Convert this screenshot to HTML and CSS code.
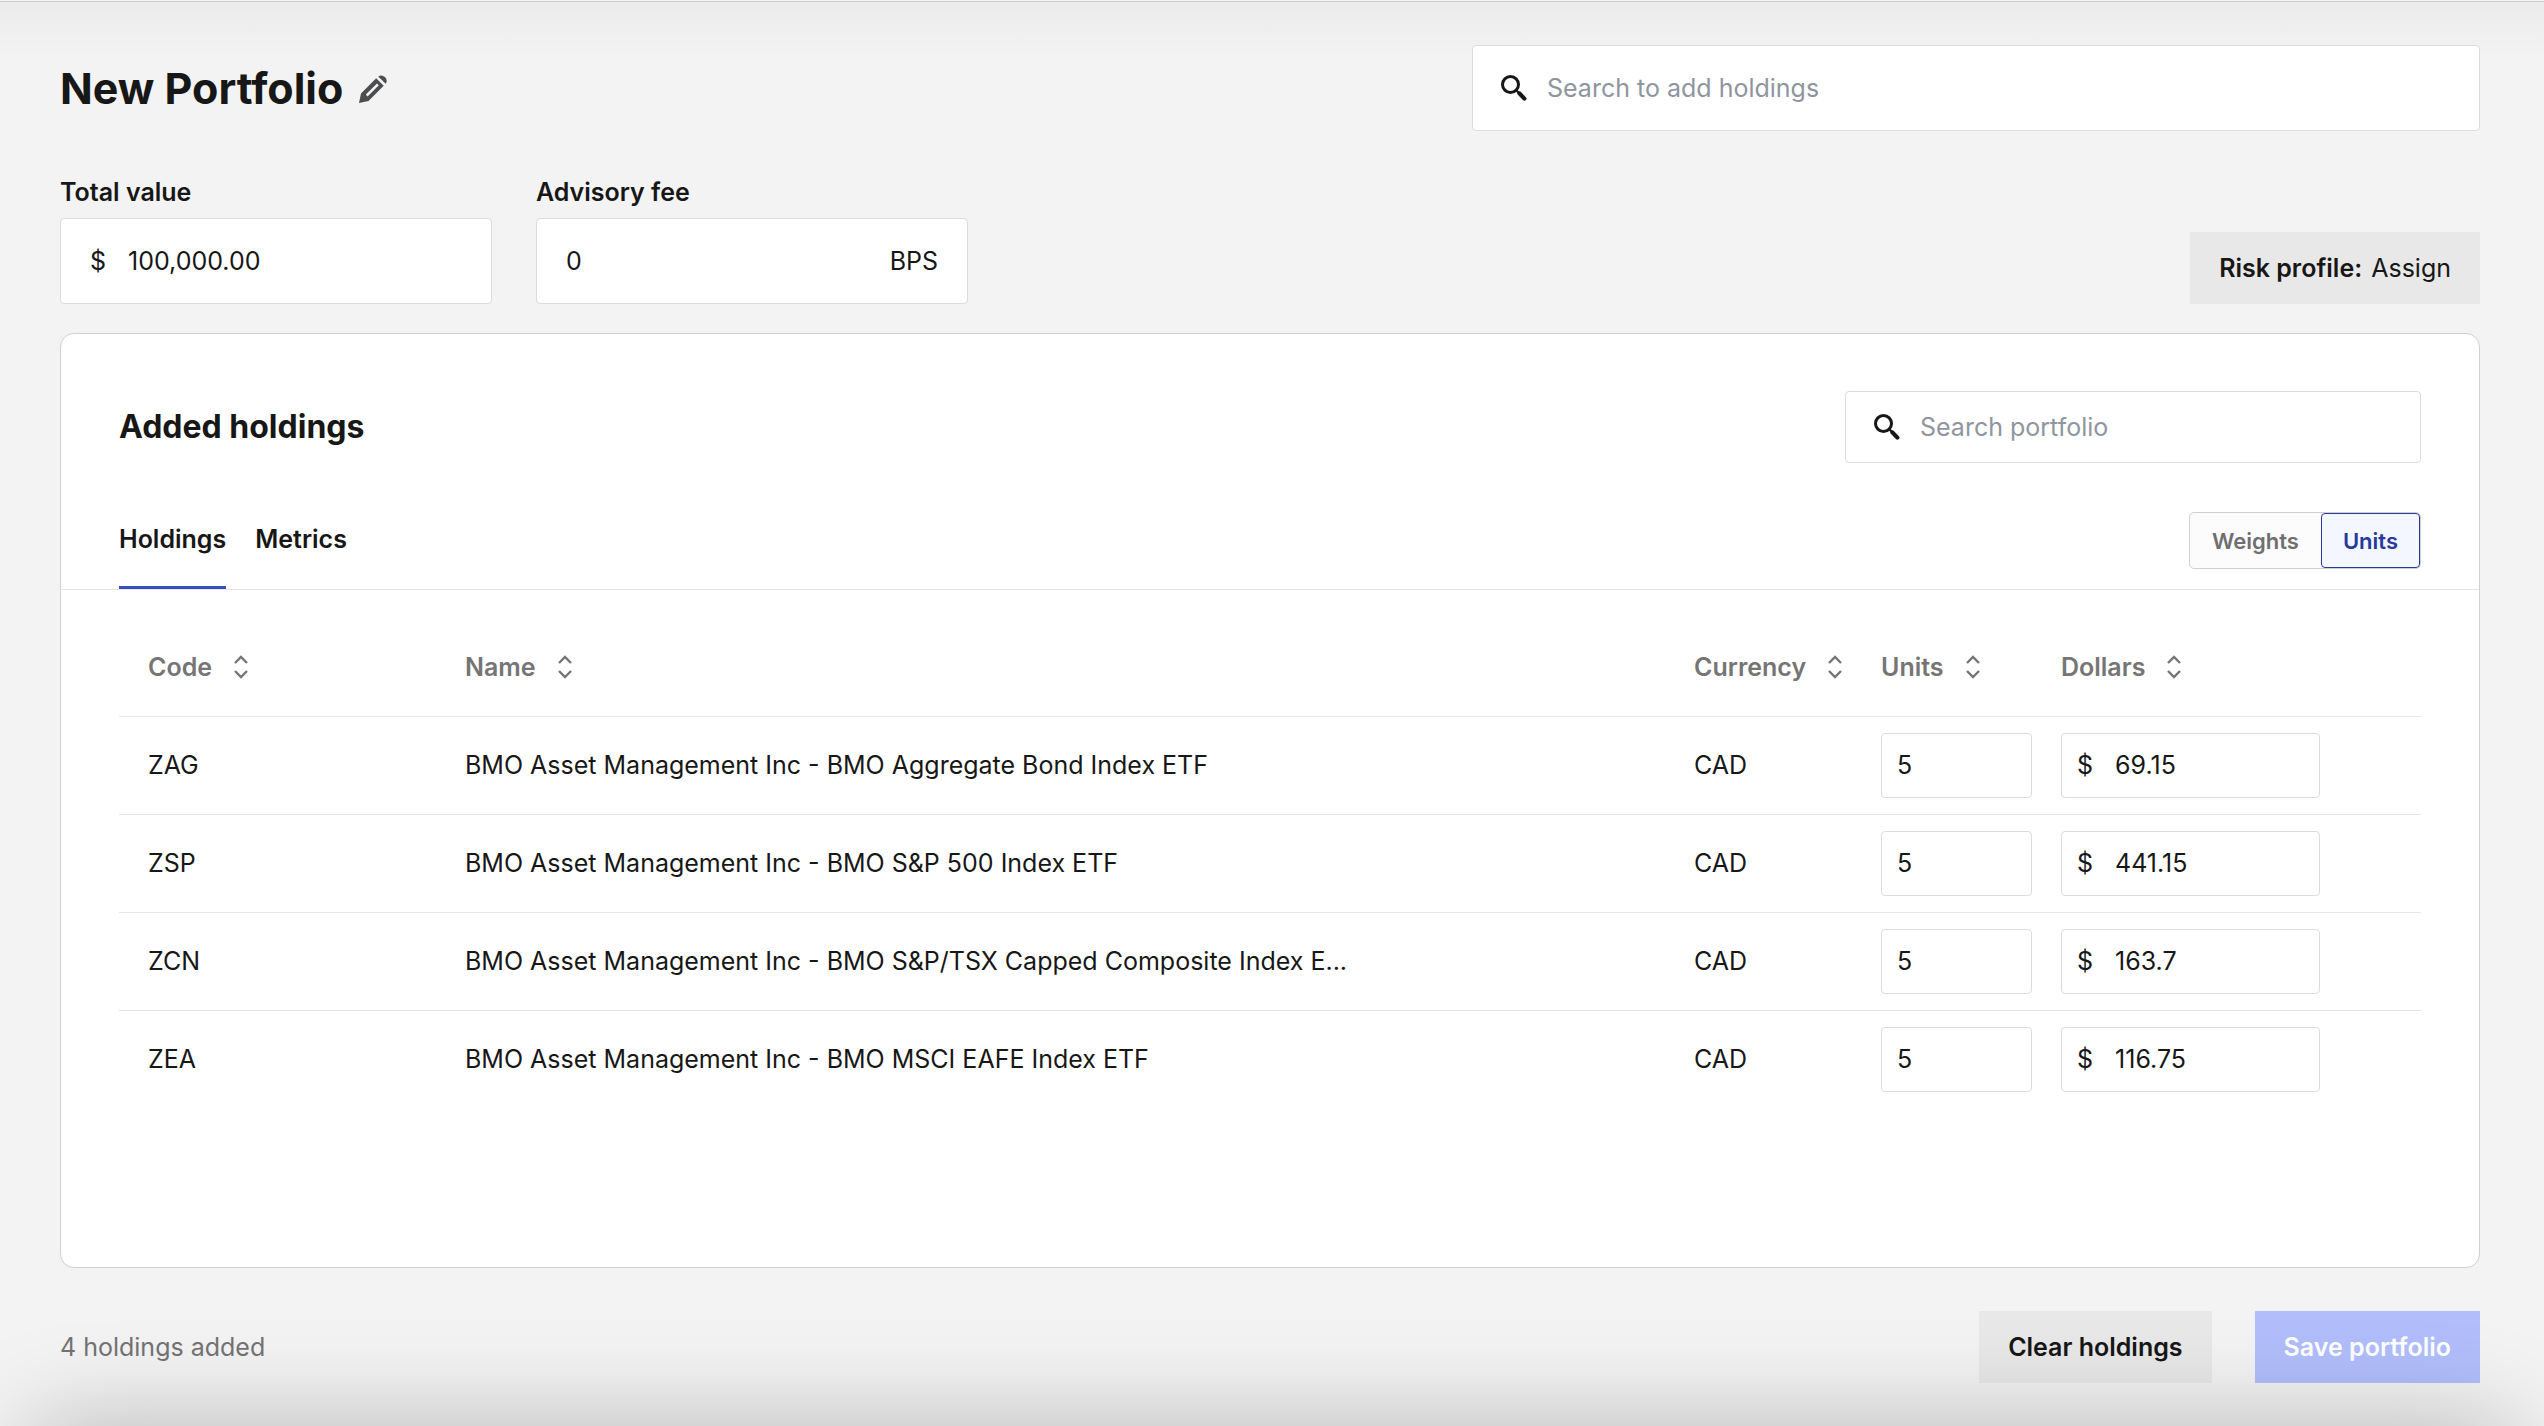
FILE: index.html
```
<!DOCTYPE html>
<html lang="en">
<head>
    <meta charset="UTF-8">
    <meta name="viewport" content="width=device-width, initial-scale=1.0">
    <title>New Portfolio</title>
    <link rel="stylesheet" href="styles.css">
</head>
<body>
    <!-- Shared icons -->
    <svg class="sprite" aria-hidden="true">
        <symbol id="icon-search" viewBox="0 0 26 26">
            <circle cx="9.5" cy="9.5" r="8" fill="none" stroke="currentColor" stroke-width="3" />
            <path d="M15 15 L18 18" fill="none" stroke="currentColor" stroke-width="2.4" />
            <path d="M18.4 18.4 L23.4 23.6" fill="none" stroke="currentColor" stroke-width="4.2" stroke-linecap="round" />
        </symbol>
        <symbol id="icon-sort" viewBox="0 0 18 26">
            <path d="M3 9 L9 3 L15 9 M3 17 L9 23 L15 17" fill="none" stroke="currentColor" stroke-width="2.4" />
        </symbol>
    </svg>

    <div class="page">
        <header class="page-header">
            <div class="title">
                <h1>New Portfolio</h1>
                <button type="button" class="btn-edit" aria-label="Edit name">
                    <svg class="icon-edit" viewBox="0 0 29 29">
                        <path fill-rule="evenodd" d="M0 29 L2 19.5 L17.2 4.3 L24.7 11.8 L9.5 27 Z M6.8 20.6 L8.6 22.4 L19.8 11.2 L18 9.4 Z" />
                        <path d="M19.2 2.6 A5.3 5.3 0 0 1 26.7 9.8 Z" />
                    </svg>
                </button>
            </div>
            <label class="search-box search-add">
                <svg class="icon-search"><use href="#icon-search" /></svg>
                <input type="search" placeholder="Search to add holdings" aria-label="Search to add holdings">
            </label>
        </header>

        <div class="settings">
            <div class="field">
                <label for="totalValue">Total value</label>
                <div class="input-box">
                    <span>$</span>
                    <input type="text" id="totalValue" value="100,000.00">
                </div>
            </div>
            <div class="field">
                <label for="advisoryFee">Advisory fee</label>
                <div class="input-box">
                    <input type="text" id="advisoryFee" value="0">
                    <span>BPS</span>
                </div>
            </div>
            <button type="button" class="btn btn-risk"><strong>Risk profile:</strong> Assign</button>
        </div>

        <main class="card">
            <div class="card-header">
                <h2>Added holdings</h2>
                <label class="search-box search-portfolio">
                    <svg class="icon-search"><use href="#icon-search" /></svg>
                    <input type="search" placeholder="Search portfolio" aria-label="Search portfolio">
                </label>
            </div>

            <div class="card-tabs">
                <nav class="tabs">
                    <a href="#holdings" class="tab active">Holdings</a>
                    <a href="#metrics" class="tab">Metrics</a>
                </nav>
                <div class="toggle">
                    <button type="button">Weights</button>
                    <button type="button" class="active">Units</button>
                </div>
            </div>

            <div class="table-wrap" id="holdings">
                <table class="holdings">
                    <colgroup>
                        <col class="col-code">
                        <col>
                        <col class="col-currency">
                        <col class="col-units">
                        <col class="col-dollars">
                    </colgroup>
                    <thead>
                        <tr>
                            <th><button type="button">Code <svg class="icon-sort"><use href="#icon-sort" /></svg></button></th>
                            <th><button type="button">Name <svg class="icon-sort"><use href="#icon-sort" /></svg></button></th>
                            <th><button type="button">Currency <svg class="icon-sort"><use href="#icon-sort" /></svg></button></th>
                            <th><button type="button">Units <svg class="icon-sort"><use href="#icon-sort" /></svg></button></th>
                            <th><button type="button">Dollars <svg class="icon-sort"><use href="#icon-sort" /></svg></button></th>
                        </tr>
                    </thead>
                    <tbody>
                        <tr>
                            <td>ZAG</td>
                            <td><div class="name">BMO Asset Management Inc - BMO Aggregate Bond Index ETF</div></td>
                            <td>CAD</td>
                            <td><div class="cell-input units"><input type="text" value="5" aria-label="ZAG units"></div></td>
                            <td><div class="cell-input dollars"><span>$</span><input type="text" value="69.15" aria-label="ZAG dollars"></div></td>
                        </tr>
                        <tr>
                            <td>ZSP</td>
                            <td><div class="name">BMO Asset Management Inc - BMO S&amp;P 500 Index ETF</div></td>
                            <td>CAD</td>
                            <td><div class="cell-input units"><input type="text" value="5" aria-label="ZSP units"></div></td>
                            <td><div class="cell-input dollars"><span>$</span><input type="text" value="441.15" aria-label="ZSP dollars"></div></td>
                        </tr>
                        <tr>
                            <td>ZCN</td>
                            <td><div class="name">BMO Asset Management Inc - BMO S&amp;P/TSX Capped Composite Index E...</div></td>
                            <td>CAD</td>
                            <td><div class="cell-input units"><input type="text" value="5" aria-label="ZCN units"></div></td>
                            <td><div class="cell-input dollars"><span>$</span><input type="text" value="163.7" aria-label="ZCN dollars"></div></td>
                        </tr>
                        <tr>
                            <td>ZEA</td>
                            <td><div class="name">BMO Asset Management Inc - BMO MSCI EAFE Index ETF</div></td>
                            <td>CAD</td>
                            <td><div class="cell-input units"><input type="text" value="5" aria-label="ZEA units"></div></td>
                            <td><div class="cell-input dollars"><span>$</span><input type="text" value="116.75" aria-label="ZEA dollars"></div></td>
                        </tr>
                    </tbody>
                </table>
            </div>
        </main>

        <footer class="page-footer">
            <span class="count">4 holdings added</span>
            <button type="button" class="btn btn-clear">Clear holdings</button>
            <button type="button" class="btn btn-save" disabled>Save portfolio</button>
        </footer>
    </div>
</body>
</html>
```
FILE: styles.css
```
* {
    margin: 0;
    padding: 0;
    box-sizing: border-box;
}

body {
    padding-top: 1px;
    font-family: Inter, sans-serif;
    font-size: 25px;
    line-height: 40px;
    color: #171717;
    background: #f3f3f3;
}

/* Shadow of the bar below the page */
body::after {
    content: "";
    position: fixed;
    left: 32px;
    right: 32px;
    top: 100%;
    height: 100px;
    box-shadow: 0 0 100px rgba(0, 0, 0, 0.26);
    pointer-events: none;
}

input,
button {
    font: inherit;
    color: inherit;
    border: none;
    background: none;
    outline: none;
}

button {
    cursor: pointer;
}

input {
    flex: 1;
    width: 100%;
    min-width: 0;
}

input::placeholder {
    color: #8f959e;
    opacity: 1;
}

svg {
    display: block;
    flex: none;
}

.sprite {
    position: absolute;
    width: 0;
    height: 0;
}

.page {
    display: flex;
    flex-direction: column;
    min-height: calc(100vh - 1px);
    padding: 43px 64px 43px 60px;
    border-top: 1px solid #cdcdcd;
    background: linear-gradient(#ebebeb, #f3f3f3 56px);
}

.page-header {
    display: flex;
    justify-content: space-between;
    align-items: center;
}

.title {
    display: flex;
    align-items: center;
    gap: 16px;
}

h1 {
    font-size: 43px;
    font-weight: 700;
    line-height: 56px;
}

.icon-edit {
    width: 29px;
    height: 29px;
    fill: #4c4d50;
}

.search-box {
    display: flex;
    align-items: center;
    gap: 20px;
    padding: 0 28px;
    background: white;
    border: 1px solid #dcdcdc;
    border-radius: 4px;
}

.search-add {
    width: 1008px;
    height: 86px;
}

.search-portfolio {
    width: 576px;
    height: 72px;
}

.icon-search {
    width: 26px;
    height: 26px;
}

.settings {
    display: flex;
    align-items: flex-end;
    gap: 44px;
    margin-top: 41px;
}

.field {
    width: 432px;
}

.field label {
    display: block;
    margin-bottom: 6px;
    font-weight: 600;
}

.input-box {
    display: flex;
    align-items: center;
    gap: 22px;
    height: 86px;
    padding: 0 29px;
    background: white;
    border: 1px solid #dcdcdc;
    border-radius: 4px;
}

.btn {
    height: 72px;
    padding: 0 29px;
    font-weight: 600;
    background: #e8e8e8;
}

.btn-risk {
    margin-left: auto;
    font-weight: 400;
}

.btn-risk strong {
    margin-right: 2px;
    font-weight: 600;
}

.card {
    flex: 1;
    margin-top: 29px;
    background: white;
    border: 1px solid #d0d0d0;
    border-radius: 14px;
}

.card-header {
    display: flex;
    justify-content: space-between;
    align-items: center;
    padding: 57px 58px 0;
}

h2 {
    font-size: 32px;
    font-weight: 700;
}

.card-tabs {
    display: flex;
    justify-content: space-between;
    align-items: flex-end;
    margin-top: 49px;
    padding: 0 58px;
    border-bottom: 1px solid #e6e6e6;
}

.tabs {
    display: flex;
    gap: 29px;
}

.tab {
    height: 70px;
    font-weight: 600;
    color: inherit;
    text-decoration: none;
}

.tab.active {
    border-bottom: 3px solid #364fc7;
}

.toggle {
    display: flex;
    height: 57px;
    margin-bottom: 20px;
    background: #fcfcfc;
    border: 1px solid #d0d0d0;
    border-radius: 5px;
}

.toggle button {
    padding: 0 21px;
    font-size: 22px;
    font-weight: 600;
    color: #6f6f6f;
    border: 1px solid transparent;
    border-radius: 4px;
}

.toggle button.active {
    color: #253a9b;
    background: #f4f7ff;
    border-color: #253a9b;
}

.table-wrap {
    padding: 28px 58px 0;
}

.holdings {
    width: 100%;
    table-layout: fixed;
    border-collapse: collapse;
    text-align: left;
}

.col-code {
    width: 346px;
}

.col-currency {
    width: 187px;
}

.col-units {
    width: 180px;
}

.col-dollars {
    width: 360px;
}

.holdings tr {
    height: 98px;
    border-bottom: 1px solid #e6e6e6;
}

.holdings tbody tr:last-child {
    border-bottom: none;
}

.holdings th:first-child,
.holdings td:first-child {
    padding-left: 29px;
}

.holdings th button {
    display: flex;
    align-items: center;
    gap: 20px;
    font-weight: 600;
    color: #757575;
}

.icon-sort {
    width: 18px;
    height: 26px;
}

.name {
    overflow: hidden;
    white-space: nowrap;
    text-overflow: ellipsis;
}

.cell-input {
    display: flex;
    align-items: center;
    gap: 22px;
    height: 65px;
    padding: 0 15px;
    border: 1px solid #dcdcdc;
    border-radius: 4px;
}

.units {
    width: 151px;
}

.dollars {
    width: 259px;
}

.page-footer {
    display: flex;
    align-items: center;
    gap: 43px;
    margin-top: 43px;
}

.count {
    margin-right: auto;
    color: #737373;
}

.btn-save {
    color: white;
    background: #b1befb;
    cursor: default;
}
```
